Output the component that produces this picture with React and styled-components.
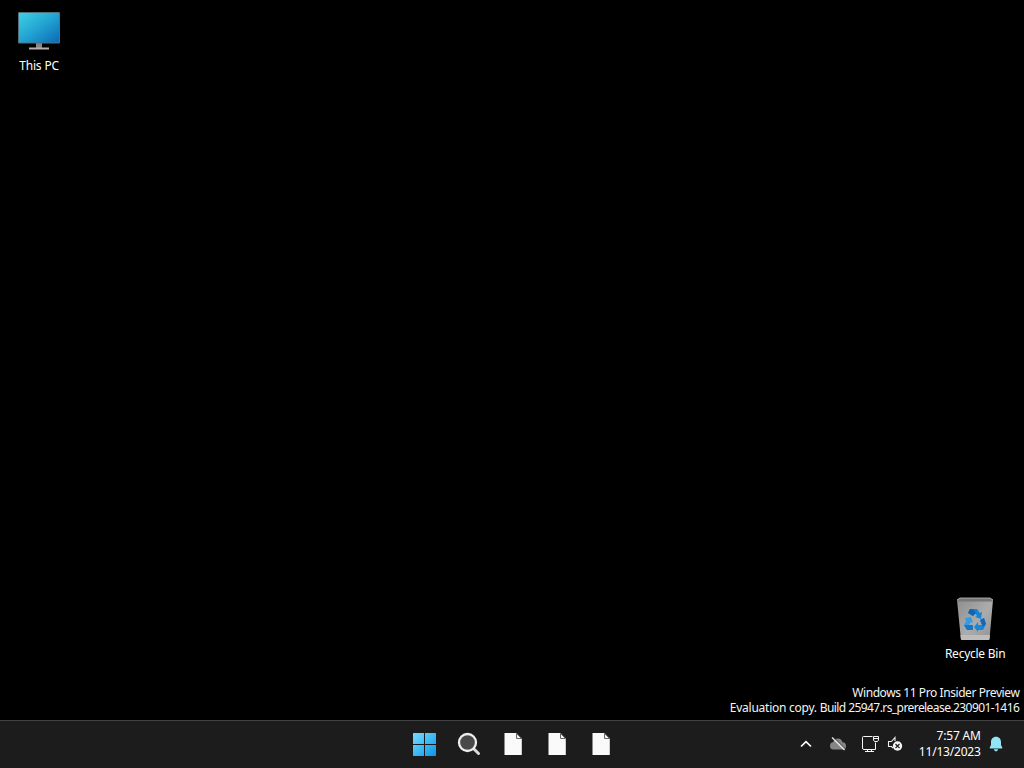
import React from "react";
import styled, { createGlobalStyle } from "styled-components";

const GlobalStyle = createGlobalStyle`
  * { box-sizing: border-box; }
  body { margin: 0; background: #000; overflow: hidden; }
  svg { display: block; flex: none; }
`;

const Screen = styled.div`
  width: 1024px;
  height: 768px;
  display: flex;
  flex-direction: column;
  background: #000;
  color: #fff;
  font-family: "Noto Sans", "Open Sans", sans-serif;
  font-size: 12px;
  line-height: 16px;
  overflow: hidden;
`;

const Desktop = styled.main`
  flex: 1;
  display: flex;
  flex-direction: column;
  justify-content: space-between;
`;

const DesktopFooter = styled.div`
  display: flex;
  flex-direction: column;
  align-items: flex-end;
`;

const Shortcut = styled.div`
  width: 76px;
  display: flex;
  flex-direction: column;
  align-items: center;
  margin: ${(p) => p.$margin};
`;

const Label = styled.span`
  display: block;
  white-space: nowrap;
  line-height: ${(p) => p.$line || 16}px;
  letter-spacing: ${(p) => p.$spacing || 0}px;
  margin-right: ${(p) => p.$spacing || 0}px;
`;

const BuildNumber = styled.span`
  letter-spacing: -0.57px;
`;

const Watermark = styled.div`
  display: flex;
  flex-direction: column;
  align-items: flex-end;
  padding: 0 5px 5px 0;
  color: #f4f4f4;
`;

const Taskbar = styled.footer`
  height: 48px;
  display: grid;
  grid-template-columns: 403px 220px 1fr;
  padding-bottom: 2px;
  background: #1c1c1c;
  border-top: 1px solid #414141;
`;

const Apps = styled.nav`
  grid-column: 2;
  display: flex;
`;

const AppButton = styled.button`
  width: 44px;
  height: 45px;
  padding: 0;
  border: 0;
  background: transparent;
  display: flex;
  align-items: center;
  justify-content: center;
`;

const Tray = styled.div`
  display: flex;
  align-items: center;
  justify-content: flex-end;
  padding-right: 19px;
`;

const TrayIcon = styled.div`
  width: ${(p) => p.$width}px;
  display: flex;
  justify-content: center;
`;

const Clock = styled.div`
  width: 83px;
  display: flex;
  flex-direction: column;
  align-items: flex-end;
  padding-right: 6.5px;
`;

const ThisPc = () => (
  <svg width="44" height="40" viewBox="0 0 44 40">
    <defs>
      <linearGradient id="pc" x1="0" y1="0" x2="1" y2="1">
        <stop offset="0" stopColor="#3fd0e4" />
        <stop offset=".5" stopColor="#22a3d2" />
        <stop offset="1" stopColor="#0d69b5" />
      </linearGradient>
    </defs>
    <path d="M19 32h6v5h-6z" fill="#858585" />
    <path d="M12 36.500h20v2H12z" fill="#b4aeae" />
    <rect x="1" y="1" width="42" height="31.5" rx="1" fill="#50717c" />
    <rect x="2" y="2" width="40" height="29.5" fill="url(#pc)" />
  </svg>
);

const RecycleBin = () => (
  <svg width="38" height="44" viewBox="0 0 38 44">
    <defs>
      <linearGradient id="bin" x1="0" y1="0" x2="1" y2="1">
        <stop offset="0" stopColor="#8d8d8d" />
        <stop offset=".55" stopColor="#acacac" />
        <stop offset="1" stopColor="#929292" />
      </linearGradient>
    </defs>
    <path d="M1 3L4 1H34L37 3L33.500 42Q33.400 43 32.500 43H6Q5 43 4.900 42Z" fill="url(#bin)" />
    <path d="M1 3L4 1H34L37 3L36 4.500H2Z" fill="#777" />
    <path d="M1 3L4 1H34L37 3" fill="none" stroke="#bcbcbc" strokeWidth=".8" />
    <path d="M4.500 38H34L33.500 42Q33.400 43 32.500 43H6Q5 43 4.900 42Z" fill="#bdbdbd" />
    <path d="M14 12h7l3 4 2-1-1 7-6-2 2-1-2-3-2 3-5-3z" fill="#1685d3" />
    <path d="M14 12l3 0 3 4-3 3-5-3z" fill="#1265b4" />
    <path d="M9 21l6-1 2 6-2-1-2 3h4v5h-6l-3-5 2-4z" fill="#349be5" />
    <path d="M8 28h9v5h-6z" fill="#1876c7" />
    <path d="M24 23l4-2 2 6-3 6h-5v2l-4-5 4-5v3h4z" fill="#1687db" />
    <path d="M24 23l4-2 2 6-3 3z" fill="#1667b8" />
  </svg>
);

const StartIcon = () => (
  <svg width="24" height="24" viewBox="0.5 -0.5 24 24">
    <defs>
      <linearGradient id="start" x1="0" y1="0" x2="24" y2="24" gradientUnits="userSpaceOnUse">
        <stop offset="0" stopColor="#7bdcff" />
        <stop offset=".5" stopColor="#3dbbf5" />
        <stop offset="1" stopColor="#0b92ea" />
      </linearGradient>
    </defs>
    <path d="M1 .5H11.500V11.500H.5V1ZM12.500 .5H23L23.500 1V11.500H12.500ZM.5 12.500H11.500V23.500H1L.5 23ZM12.500 12.500H23.500V23L23 23.500H12.500Z" fill="url(#start)" />
  </svg>
);

const SearchIcon = () => (
  <svg width="24" height="24" viewBox="0 0 24 24">
    <path d="M17 17L21.500 21.500" stroke="#d9d9d9" strokeWidth="3" strokeLinecap="round" />
    <circle cx="10.500" cy="10.500" r="8.500" fill="#494949" stroke="#eeeeee" strokeWidth="2.300" />
  </svg>
);

const FileIcon = () => (
  <svg width="18" height="24" viewBox="0 0 18 24">
    <path d="M.5 1H12.500L17.800 6.500V23H.5Z" fill="#fafafa" />
    <path d="M12.500 1.500V6.500H17.500Z" fill="#f4f4f4" stroke="#666" strokeWidth="1" />
  </svg>
);

const ChevronIcon = () => (
  <svg width="12" height="8" viewBox="0 0 12 8">
    <path d="M1 6.500L6 1.700L11 6.500" fill="none" stroke="#fff" strokeWidth="1.700" />
  </svg>
);

const CloudIcon = () => (
  <svg width="18" height="16" viewBox="0 0 18 16">
    <path d="M4.500 13.500Q1 13.500 1 10Q1 6.500 4 6.300Q5.500 2.500 9 2.500Q12.500 2.500 13.500 6.300Q17 6.500 17 10Q17 13.500 14 13.500Z" fill="#858585" />
    <path d="M4.500 1L17 13.500" stroke="#404040" strokeWidth=".7" />
    <path d="M3 1.500L15.500 14" stroke="#ededed" strokeWidth="1.300" />
  </svg>
);

const NetworkIcon = () => (
  <svg width="18" height="18" viewBox="0 0 18 18">
    <g fill="none" stroke="#f5f5f5" strokeWidth="1">
      <path d="M11.500 1.500H2.500Q1.500 1.500 1.500 2.500V13Q1.500 14.500 3 14.500H14.500V7.500M6.500 14.500V17M10.500 14.500V17M4 16.500H13" />
      <path d="M12.500 1.500H17.500V5L16.500 6.500H13.500L12.500 5ZM12.500 3.500H17.500" />
    </g>
  </svg>
);

const SpeakerIcon = () => (
  <svg width="16" height="16" viewBox="0 0 16 16">
    <path d="M8 5V1.500L4.500 5.500H1.500V10.500H4.500L6 12" fill="none" stroke="#eee" strokeWidth="1.100" />
    <circle cx="10.500" cy="10" r="4.700" fill="#f5f5f5" />
    <path d="M8.500 8L12.500 12M12.500 8L8.500 12" stroke="#202020" strokeWidth="1.200" />
  </svg>
);

const BellIcon = () => (
  <svg width="14" height="16" viewBox="0 0 14 16">
    <path d="M7 .7C3.800 .7 2 3 2 6V9L.7 11.500Q.5 12.500 1.500 12.500H12.500Q13.500 12.500 13.300 11.500L12 9V6C12 3 10.200 .7 7 .7ZM4.800 13.300H9.200Q8.800 15.400 7 15.400Q5.200 15.400 4.800 13.300Z" fill="#91e5f7" />
  </svg>
);

export default function App() {
  return (
    <>
      <GlobalStyle />
      <Screen>
        <Desktop>
          <Shortcut $margin="11px 0 0 1px">
            <ThisPc />
            <Label $spacing={-0.15} $line={29}>This PC</Label>
          </Shortcut>
          <DesktopFooter>
            <Shortcut $margin="0 11px 19px 0">
              <RecycleBin />
              <Label $spacing={-0.25} $line={25}>Recycle Bin</Label>
            </Shortcut>
            <Watermark>
              <Label $spacing={-0.42} $line={15}>Windows 11 Pro Insider Preview</Label>
              <Label $spacing={-0.25} $line={15}>
                Evaluation copy. <BuildNumber>Build 25947.rs_prerelease.230901-1416</BuildNumber>
              </Label>
            </Watermark>
          </DesktopFooter>
        </Desktop>
        <Taskbar>
          <Apps>
            <AppButton aria-label="Start"><StartIcon /></AppButton>
            <AppButton aria-label="Search"><SearchIcon /></AppButton>
            <AppButton aria-label="File"><FileIcon /></AppButton>
            <AppButton aria-label="File"><FileIcon /></AppButton>
            <AppButton aria-label="File"><FileIcon /></AppButton>
          </Apps>
          <Tray>
            <TrayIcon $width={32}><ChevronIcon /></TrayIcon>
            <TrayIcon $width={32}><CloudIcon /></TrayIcon>
            <TrayIcon $width={32}><NetworkIcon /></TrayIcon>
            <TrayIcon $width={18}><SpeakerIcon /></TrayIcon>
            <Clock>
              <Label $spacing={-0.2}>7:57 AM</Label>
              <Label $spacing={-0.2}>11/13/2023</Label>
            </Clock>
            <TrayIcon $width={18}><BellIcon /></TrayIcon>
          </Tray>
        </Taskbar>
      </Screen>
    </>
  );
}
